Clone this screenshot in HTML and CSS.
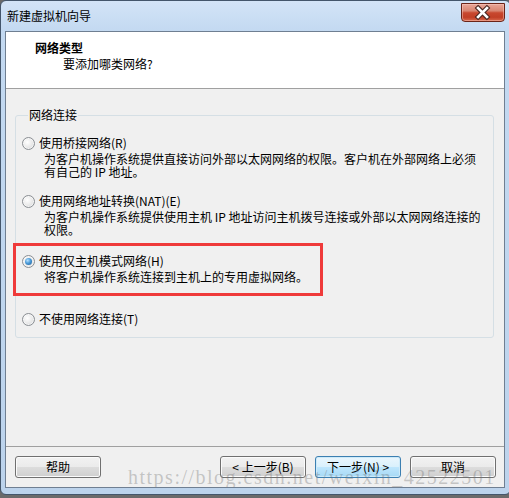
FILE: index.html
```html
<!DOCTYPE html>
<html lang="zh-CN">
<head>
<meta charset="utf-8">
<title>新建虚拟机向导</title>
<link rel="stylesheet" href="styles.css">
</head>
<body>
<div class="window">
  <div class="titlebar">
    <span class="title">新建虚拟机向导</span>
    <div class="close">
      <svg width="44" height="19" viewBox="0 0 44 19">
        <path d="M17.5 5 L26.5 14 M26.5 5 L17.5 14" stroke="#4a2620" stroke-width="5" stroke-linecap="square" fill="none"/>
        <path d="M17.5 5 L26.5 14 M26.5 5 L17.5 14" stroke="#ffffff" stroke-width="2.8" stroke-linecap="square" fill="none"/>
      </svg>
    </div>
  </div>
  <div class="client">
    <div class="header">
      <div class="h-title">网络类型</div>
      <div class="h-sub">要添加哪类网络?</div>
    </div>
    <div class="main">
      <fieldset class="group">
        <legend class="group-label">网络连接</legend>
        <div class="opt">
          <div class="opt-row"><span class="radio"></span><span>使用桥接网络(R)</span></div>
          <div class="desc">为客户机操作系统提供直接访问外部以太网网络的权限。客户机在外部网络上必须<br>有自己的 IP 地址。</div>
        </div>
        <div class="opt opt-nat">
          <div class="opt-row"><span class="radio"></span><span>使用网络地址转换(NAT)(E)</span></div>
          <div class="desc">为客户机操作系统提供使用主机 IP 地址访问主机拨号连接或外部以太网网络连接的<br>权限。</div>
        </div>
        <div class="opt opt-host">
          <div class="opt-row"><span class="radio checked"></span><span>使用仅主机模式网络(H)</span></div>
          <div class="desc">将客户机操作系统连接到主机上的专用虚拟网络。</div>
        </div>
        <div class="opt opt-none">
          <div class="opt-row"><span class="radio"></span><span>不使用网络连接(T)</span></div>
        </div>
      </fieldset>
    </div>
    <div class="footer">
      <button class="btn">帮助</button>
      <button class="btn btn-back">&lt; 上一步(B)</button>
      <button class="btn btn-default">下一步(N) &gt;</button>
      <button class="btn">取消</button>
    </div>
    <div class="annot"></div>
    <div class="watermark">https://blog.csdn.net/weixin_42522501</div>
  </div>
</div>
</body>
</html>
```

FILE: styles.css
```css
html, body {
  margin: 0;
  padding: 0;
}
body {
  width: 509px;
  height: 498px;
  overflow: hidden;
  background: #6a6a6a;
  font-family: "Noto Sans CJK SC", "Noto Sans", sans-serif;
  font-size: 12px;
  color: #000;
}
.window {
  box-sizing: border-box;
  width: 511px;
  height: 495px;
  border: 1px solid #44566b;
  border-radius: 6px 6px 6px 6px;
  background: linear-gradient(to bottom, #d3e4f7 0px, #c3d9f1 30px, #bcd3ec 100%);
  padding: 0 5px 6px 4px;
  display: flex;
  flex-direction: column;
}
.titlebar {
  height: 30px;
  display: flex;
  justify-content: space-between;
  align-items: flex-start;
}
.title {
  margin: 8px 0 0 2px;
  line-height: 14px;
  color: #000;
}
.close {
  margin: 2px 0 0 0;
  width: 44px;
  height: 19px;
  box-sizing: border-box;
  border: 1px solid #6b2418;
  border-radius: 0 0 4px 4px;
  background: linear-gradient(to bottom, #e9a698 0%, #d98672 40%, #c8482f 52%, #c13f26 78%, #d9694d 100%);
  box-shadow: inset 0 0 0 1px rgba(255, 210, 200, 0.45);
  display: flex;
}
.close svg {
  margin: -1px 0 0 -1px;
}
.client {
  position: relative;
  flex: 1;
  display: flex;
  flex-direction: column;
  border: 1px solid #6f7f92;
  background: #f0f0f0;
  overflow: hidden;
}
.header {
  height: 56px;
  background: #fff;
  border-bottom: 1px solid #a0a0a0;
  padding: 8px 0 0 29px;
  box-sizing: content-box;
  height: 48px;
}
.h-title {
  font-weight: bold;
  line-height: 16px;
}
.h-sub {
  line-height: 16px;
  margin-left: 28px;
}
.main {
  flex: 1;
  display: flex;
  flex-direction: column;
}
.group {
  margin: 19px 10px 0 9px;
  padding: 12px 0 9px 6px;
  border: 1px solid #d5dfe5;
  border-radius: 3px;
  min-inline-size: 0;
}
.group-label {
  margin-left: 6px;
  padding: 0 1px;
  line-height: 14px;
}
.opt-row {
  display: flex;
  align-items: center;
  height: 18px;
  line-height: 18px;
  gap: 4px;
}
.desc {
  margin-left: 22px;
  line-height: 13px;
  white-space: nowrap;
}
.opt-nat { margin-top: 14px; }
.opt-host { margin-top: 16px; }
.opt-none { margin-top: 27px; }
.radio {
  box-sizing: border-box;
  width: 13px;
  height: 13px;
  border-radius: 50%;
  border: 1px solid #8a8e93;
  background: radial-gradient(circle at 40% 38%, #ffffff 0%, #ececec 45%, #cfd1d3 100%);
  box-shadow: inset 0 0 0 1px rgba(255, 255, 255, 0.6);
  display: grid;
  place-items: center;
  flex: none;
}
.radio.checked::after {
  content: "";
  width: 7px;
  height: 7px;
  border-radius: 50%;
  background: radial-gradient(circle at 38% 35%, #b8e2ff 0%, #4a9ad8 45%, #1b5a93 100%);
}
.footer {
  border-top: 1px solid #a0a0a0;
  padding: 9px 8px 9px 9px;
  display: flex;
  gap: 9px;
}
.btn {
  box-sizing: border-box;
  width: 86px;
  height: 22px;
  margin: 0;
  padding: 0;
  font-family: "Noto Sans CJK SC", "Noto Sans", sans-serif;
  font-size: 12px;
  line-height: 14px;
  color: #000;
  border: 1px solid #707070;
  border-radius: 3px;
  background: linear-gradient(to bottom, #f2f2f2 0%, #ebebeb 50%, #dddddd 50%, #cfcfcf 100%);
  box-shadow: inset 0 0 0 1px #fbfbfb;
  display: flex;
  align-items: center;
  justify-content: center;
}
.btn-back {
  margin-left: auto;
}
.btn-default {
  border-color: #3c7fb1;
  background: linear-gradient(to bottom, #eaf6fd 0%, #d9f0fc 50%, #bee6fd 50%, #a7d9f5 100%);
  box-shadow: inset 0 0 0 1px #cdeaf9;
}
.annot {
  position: absolute;
  left: 7px;
  top: 211px;
  width: 310px;
  height: 53px;
  box-sizing: border-box;
  border: 3px solid #ef3a3a;
}
.watermark {
  position: absolute;
  left: 122px;
  top: 435px;
  font-family: "Liberation Serif", serif;
  font-size: 20px;
  line-height: 20px;
  letter-spacing: 1.5px;
  color: rgba(110, 110, 110, 0.35);
  white-space: nowrap;
  pointer-events: none;
}
```
